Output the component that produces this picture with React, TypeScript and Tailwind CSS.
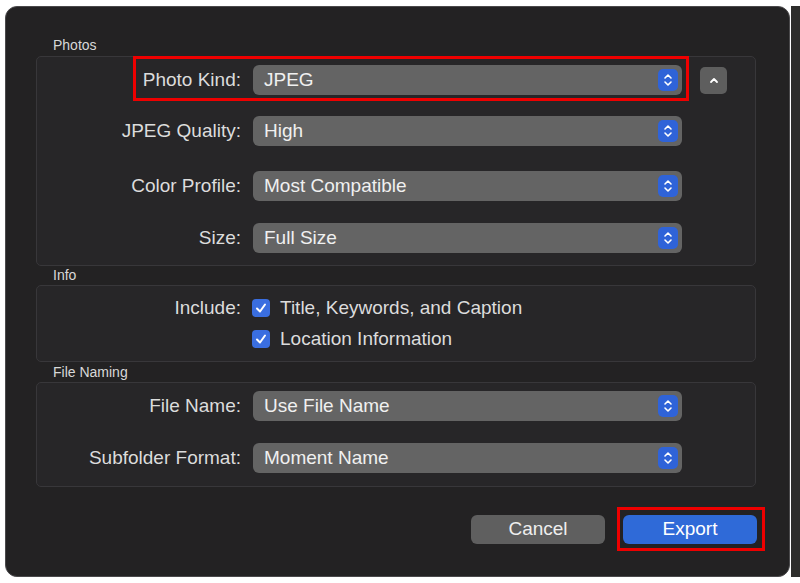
const font = { fontFamily: '"Liberation Sans", Arial, sans-serif' };

function Stepper() {
  return (
    <div className="w-[20px] h-[22px] rounded-[5px] bg-[#2f63d8] flex items-center justify-center">
      <svg width="10" height="16" viewBox="0 0 10 16" fill="none" stroke="#fff" strokeWidth="1.6" strokeLinecap="round" strokeLinejoin="round">
        <path d="M2 6 L5 3 L8 6" />
        <path d="M2 10 L5 13 L8 10" />
      </svg>
    </div>
  );
}

function SelectRow({ label, value, className = '' }: { label: string; value: string; className?: string }) {
  return (
    <div className={`flex items-center ${className}`}>
      <div className="w-[204px] text-right text-[19px] leading-[22px] text-[#dcdcdc]">{label}</div>
      <div className="ml-[12px] w-[429px] h-[30px] rounded-[6px] bg-[#646464] flex items-center justify-between pl-[11px] pr-[4px] text-[19px] leading-[22px] text-[#f0f0f0]">
        <span>{value}</span>
        <Stepper />
      </div>
    </div>
  );
}

function Check({ label }: { label: string }) {
  return (
    <div className="flex items-center gap-[10px] h-[22px]">
      <div className="w-[18px] h-[18px] rounded-[4px] bg-[#3a6ee0] flex items-center justify-center">
        <svg width="12" height="12" viewBox="0 0 12 12" fill="none" stroke="#fff" strokeWidth="2" strokeLinecap="round" strokeLinejoin="round">
          <path d="M2 6.5 L5 9.5 L10 2.5" />
        </svg>
      </div>
      <span className="text-[19px] leading-[22px] text-[#dcdcdc]">{label}</span>
    </div>
  );
}

export default function App() {
  return (
    <div className="w-[800px] h-[583px] bg-white flex overflow-hidden" style={font}>
      <div className="mt-[6px] ml-[5px] w-[785px] h-[571px] rounded-[12px] bg-[#232223] border border-[#4a494b] flex flex-col">
        <div className="ml-[47px] mt-[30px] text-[14px] leading-[16px] text-[#d8d8d8]">Photos</div>
        <div className="relative ml-[30px] mt-[3px] w-[720px] h-[210px] rounded-[5px] bg-[#272628] border border-[#38373a] flex flex-col">
          <div className="relative mt-[8px] flex items-center">
            <SelectRow label="Photo Kind:" value="JPEG" />
            <div className="ml-[18px] w-[27px] h-[27px] rounded-[5px] bg-[#5e5e5e] flex items-center justify-center">
              <svg width="10" height="8" viewBox="0 0 10 8" fill="none" stroke="#fff" strokeWidth="1.8" strokeLinecap="round" strokeLinejoin="round">
                <path d="M2 6 L5 3 L8 6" />
              </svg>
            </div>
            <div className="absolute left-[96px] top-[-9px] w-[556px] h-[45px] border-[3px] border-[#ee0000]" />
          </div>
          <SelectRow label="JPEG Quality:" value="High" className="mt-[21px]" />
          <SelectRow label="Color Profile:" value="Most Compatible" className="mt-[25px]" />
          <SelectRow label="Size:" value="Full Size" className="mt-[22px]" />
        </div>
        <div className="ml-[47px] mt-[1px] text-[14px] leading-[16px] text-[#d8d8d8]">Info</div>
        <div className="ml-[30px] mt-[2px] w-[720px] h-[77px] rounded-[5px] bg-[#272628] border border-[#38373a] flex">
          <div className="w-[204px] text-right text-[19px] leading-[22px] text-[#dcdcdc] mt-[11px]">Include:</div>
          <div className="ml-[11px] mt-[11px] flex flex-col gap-[9px]">
            <Check label="Title, Keywords, and Caption" />
            <Check label="Location Information" />
          </div>
        </div>
        <div className="ml-[47px] mt-[2px] text-[14px] leading-[16px] text-[#d8d8d8]">File Naming</div>
        <div className="ml-[30px] mt-[2px] w-[720px] h-[105px] rounded-[5px] bg-[#272628] border border-[#38373a] flex flex-col">
          <SelectRow label="File Name:" value="Use File Name" className="mt-[8px]" />
          <SelectRow label="Subfolder Format:" value="Moment Name" className="mt-[22px]" />
        </div>
        <div className="mt-[28px] ml-[465px] flex items-center">
          <div className="w-[134px] h-[29px] rounded-[6px] bg-[#5f5f5f] flex items-center justify-center text-[19px] text-[#eeeeee]">Cancel</div>
          <div className="relative ml-[18px] w-[134px] h-[29px] rounded-[6px] bg-[#2f6ad8] flex items-center justify-center text-[19px] text-white">
            Export
            <div className="absolute left-[-6px] top-[-8px] w-[148px] h-[44px] border-[3px] border-[#ee0000]" />
          </div>
        </div>
      </div>
      <div className="ml-[1px] mt-[6px] w-[9px] h-[571px] bg-[#2e2e2c]" />
    </div>
  );
}
